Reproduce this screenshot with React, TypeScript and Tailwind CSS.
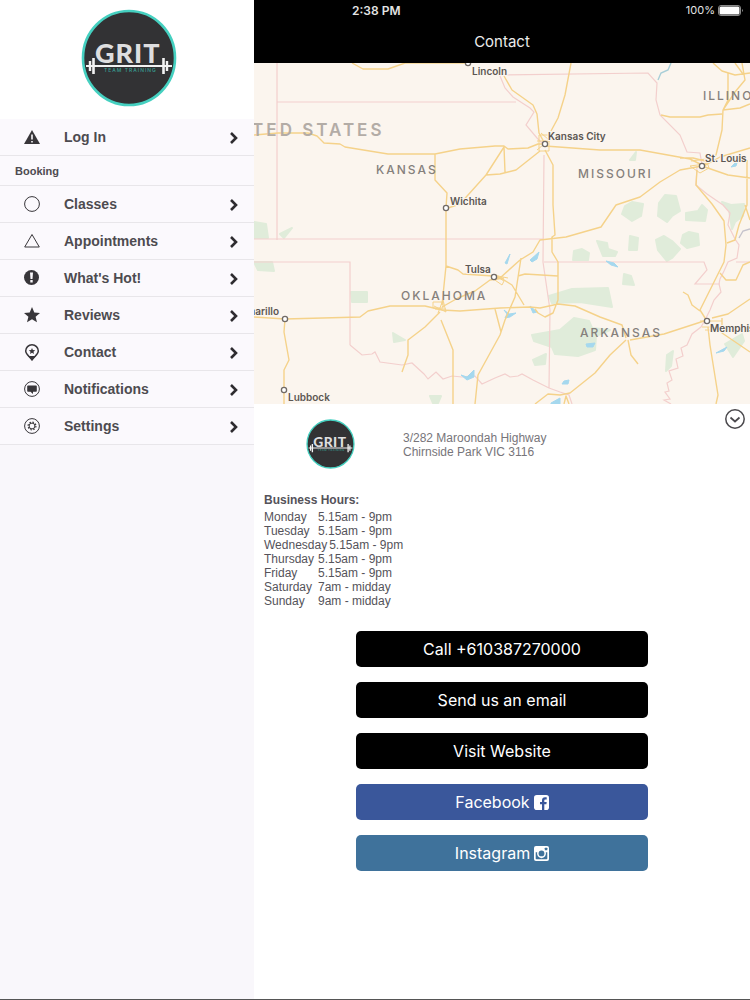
import type { ReactNode } from 'react';

const roads = [
  'M352 63L363 69H388L405 63H468',
  'M254 135L278 133H308L317 136L324 143L340 144L345 147L388 154H435L460 149L495 146H504L508 149L528 148L538 144H545',
  'M435 154V180L447 193L446 208',
  'M504 147L486 175L468 195L460 204L448 208',
  'M486 175L500 174L516 170L540 151',
  'M504 147L505 172',
  'M504 76L512 90L533 105L537 114L539 133L545 144',
  'M571 63L565 95L558 118L551 131',
  'M545 146L600 150H640L690 159L702 165',
  'M545 150L553 165V205L555 235L552 237V252L558 262V300L553 313L545 317L538 313L535 309',
  'M702 166L680 170L660 182L640 197L616 205L601 227L566 237L540 240L533 252L520 260L500 278L495 278',
  'M713 63L722 71L735 75L750 73',
  'M728 73V100L723 110L722 130L716 155L704 165',
  'M661 115L670 117H700L708 115L722 114M723 110L740 108L750 104',
  'M742 63L745 80L735 92L723 110M735 63L743 74',
  'M680 158L693 158L705 161M702 166L728 175L750 178M704 166L720 157L750 148',
  'M697 170L696 185L712 204L724 221L726 245L724 262L710 290L700 310L707 321',
  'M747 160V205L739 225L735 240L727 243M745 205L750 220',
  'M720 273L726 280H736L743 265L750 262',
  'M704 321L664 334L630 340',
  'M626 338L622 325L600 317L575 306L558 304L540 308L530 307L500 308L460 311L442 310',
  'M626 340L610 355L595 373L570 393L560 395L548 394L535 404',
  'M628 340L631 355L638 364',
  'M683 292L688 295L692 305L700 311',
  'M712 318L728 314L750 299M722 318V333L750 352M708 327L710 345L718 395L716 404',
  'M446 208V266L442 305M446 266L458 270L463 274L493 276',
  'M442 307L458 298L475 291L490 280L504 278',
  'M518 276L525 274L558 276',
  'M521 258L515 297L505 320L500 335L478 375L475 404',
  'M496 275L512 285L524 305M495 309L501 332',
  'M254 317L285 319L360 317L368 311L390 306H425L442 310',
  'M440 312L425 327L408 340V355L402 372M441 320L453 350V404',
  'M285 319L284 332L289 360L284 370V404',
  'M564 404L566 396L569 404',
];

const cityStreets = [
  'M539 135H549V151H539ZM541 133L549 140M537 141H550M537 150L550 139',
  'M433 302H443V308H433ZM434 306L446 312L443 300L438 313M435 309H446',
  'M691 161L706 159L709 168L700 173L690 166L705 164',
  'M494 275L504 281L502 285L492 278M498 276L508 278',
  'M700 321H722M702 327H716M705 330H716',
];

const borders = [
  'M277 63V240',
  'M254 239H543M277 102H516',
  'M544 155L543 262L550 310L549 388',
  'M254 262H350V345',
  'M504 75L648 73L657 83L656 100L660 115L680 135L687 152L700 153L702 165',
  'M544 262H704L707 270L695 284H720',
  'M736 262H750',
  'M500 76L505 88L513 97L530 108L534 112L526 125L537 138L545 146',
  'M350 345L362 355L372 354L375 352L380 362L402 365L412 363L424 374L428 379L436 372L443 379L452 376L462 377L470 376L475 376L482 384L495 378L505 374L510 377L518 376L522 374L533 380L549 388L560 392L569 395L572 404',
  'M697 166L696 185L707 194L723 205L730 213L728 225L735 239L739 245L737 258L728 262L724 271L720 279L719 284L721 292L714 300L710 310L705 320L701 327L692 334L687 345L681 348L683 356L676 359L678 368L669 371L672 380L667 383L669 391L665 392L670 399L664 400L671 404',
];

const forests = [
  'M625 206L632 202L643 204L641 216L632 221L622 214Z',
  'M659 203L665 195L676 196L680 211L672 216L667 222L658 216Z',
  'M686 213L698 211L702 205L707 210L705 221L686 220Z',
  'M656 240L664 236L672 241L680 249L672 258L667 261L658 250Z',
  'M683 235L689 232L698 234L699 245L687 248L681 243Z',
  'M630 236L638 238L637 250L629 250Z',
  'M597 241L607 243L608 249L617 252L615 256L603 256Z',
  'M574 251L582 249L589 253L588 260L573 260Z',
  'M624 274L631 276L634 285L623 284Z',
  'M549 296L572 289L608 288L612 307L580 302L552 303Z',
  'M532 335L560 330L574 318L589 321L592 328L610 330L596 336L595 350L578 356L555 354L552 347L534 341Z',
  'M533 360L546 354L545 364L535 365Z',
  'M667 355L673 351L671 366L666 371Z',
  'M254 222L266 224L268 238L254 238Z',
  'M280 234L292 228L284 238Z',
  'M254 262L272 262L274 271L258 270Z',
  'M351 292L367 292L367 302L352 302Z',
  'M393 333L405 340L394 342Z',
  'M430 396H441L438 403H433Z',
  'M722 202L731 205L744 204L743 216L735 222L732 229L729 210Z',
  'M725 344L742 334L744 341L733 357Z',
  'M630 160L636 152L635 160Z',
];

const lakes = [
  'M505 263L510 254L507 264Z',
  'M530 260L539 252L537 259L532 262Z',
  'M606 261L614 263L618 267L611 265Z',
  'M504 310L509 314L516 313L510 317L505 318L507 314Z',
  'M530 306L537 312L533 313Z',
  'M461 375L467 377L474 370V377L467 380Z',
  'M586 344L595 343L593 347L587 347Z',
  'M716 353L727 347L724 351Z',
  'M564 381L569 380L568 384L562 384Z',
  'M551 403L560 398V404H551Z',
  'M731 167L738 160L736 166Z',
];

const cities = [
  { name: 'Lincoln', x: 468, y: 63, tx: 472, ty: 75 },
  { name: 'Kansas City', x: 545, y: 144, tx: 548, ty: 140 },
  { name: 'St. Louis', x: 702, y: 166, tx: 705, ty: 162 },
  { name: 'Wichita', x: 446, y: 208, tx: 450, ty: 205 },
  { name: 'Tulsa', x: 494, y: 277, tx: 465, ty: 273 },
  { name: 'Amarillo', x: 285, y: 319, tx: 239, ty: 315 },
  { name: 'Lubbock', x: 284, y: 390, tx: 288, ty: 401 },
  { name: 'Memphis', x: 707, y: 321, tx: 710, ty: 332 },
];

const states = [
  { name: 'KANSAS', x: 376, y: 174 },
  { name: 'MISSOURI', x: 578, y: 178 },
  { name: 'OKLAHOMA', x: 401, y: 300 },
  { name: 'ARKANSAS', x: 580, y: 337 },
  { name: 'ILLINOIS', x: 703, y: 100 },
];

function RegionMap() {
  return (
    <svg viewBox="254 63 496 341" className="block w-full" role="img" aria-label="Map">
      <rect x="254" y="63" width="496" height="341" fill="#fbf5ee" />
      <path d={forests.join('')} fill="#e0ecda" stroke="#e0ecda" strokeWidth="2" strokeLinejoin="round" />
      <path d={borders.join('')} fill="none" stroke="#f3cfcd" strokeWidth="1.2" />
      <path d={lakes.join('')} fill="#a5d8ee" stroke="#a5d8ee" strokeWidth="1" />
      <path d="M671 63L668 70L661 73L658 80" fill="none" stroke="#a8ced8" strokeWidth="1.4" />
      <path d="M750 229L743 231L739 238" fill="none" stroke="#c5c3cc" strokeWidth="1.4" />
      <path d={roads.join('')} fill="none" stroke="#f5d28a" strokeWidth="1.4" strokeLinejoin="round" />
      <path d={cityStreets.join('')} fill="none" stroke="#f5d28a" strokeWidth="1" />
      <text x="213" y="136" className="font-[Inter] text-[17px] font-semibold tracking-[3px]" fill="#b3aca6">
        UNITED STATES
      </text>
      {states.map((s) => (
        <text key={s.name} x={s.x} y={s.y} className="font-[Inter] text-[12px] font-medium tracking-[2px]" fill="#85807c">
          {s.name}
        </text>
      ))}
      {cities.map((c) => (
        <g key={c.name}>
          <circle cx={c.x} cy={c.y} r="2.6" fill="#fff" stroke="#716a66" strokeWidth="1.3" />
          <text
            x={c.tx}
            y={c.ty}
            className="font-[Inter] text-[10px] font-semibold"
            fill="#5c5753"
            stroke="#fbf5ee"
            strokeWidth="2"
            paintOrder="stroke"
          >
            {c.name}
          </text>
        </g>
      ))}
    </svg>
  );
}

function Logo({ className }: { className: string }) {
  return (
    <svg viewBox="0 0 96 98" className={className} role="img" aria-label="Grit Team Training">
      <ellipse cx="48" cy="49" rx="46" ry="47" fill="#323234" stroke="#45d0c0" strokeWidth="2.6" />
      <text x="14" y="54" className="font-[Lato] text-[27px] font-black tracking-[1px]" fill="#dededf">
        GRIT
      </text>
      <path d="M5 57H91" stroke="#f2f2f2" strokeWidth="2" />
      <path d="M9 52V62M86 52V62" stroke="#f2f2f2" strokeWidth="2.4" />
      <path d="M12.5 49V65M82.5 49V65" stroke="#f2f2f2" strokeWidth="2.6" />
      <text x="23" y="63" className="font-[Inter] text-[5px] font-medium tracking-[1px]" fill="#389d92">
        TEAM TRAINING
      </text>
    </svg>
  );
}

const icons: Record<string, ReactNode> = {
  login: (
    <>
      <path d="M8 1L16 15H0Z" fill="currentColor" />
      <path d="M8 5.5V10.5M8 12V13.5" stroke="#fbf9fd" strokeWidth="1.6" />
    </>
  ),
  circle: <circle cx="8" cy="8" r="7.4" fill="none" stroke="currentColor" />,
  triangle: <path d="M8 1.5L15.3 14H.7Z" fill="none" stroke="currentColor" />,
  alert: (
    <>
      <circle cx="7.5" cy="7.5" r="7.5" fill="currentColor" />
      <path d="M6 2.5H9L8.5 9H6.5ZM6.3 10H8.7V12.4H6.3Z" fill="#fbf9fd" />
    </>
  ),
  star: <path d="M8 0L10.3 5.4L16 5.9L11.6 9.7L13 15.3L8 12.3L3 15.3L4.4 9.7L0 5.9L5.7 5.4Z" fill="currentColor" />,
  pin: (
    <>
      <path
        d="M8 .8A6.3 6.3 0 0 1 14.3 7.1C14.3 10.5 10 12.8 8 15.8C6 12.8 1.7 10.5 1.7 7.1A6.3 6.3 0 0 1 8 .8Z"
        fill="none"
        stroke="currentColor"
        strokeWidth="1.5"
      />
      <path d="M4 12H12L8 16.5Z" fill="currentColor" />
      <path d="M8 4L8.9 6.1L11.2 6.3L9.5 7.8L10 10L8 8.8L6 10L6.5 7.8L4.8 6.3L7.1 6.1Z" fill="currentColor" />
    </>
  ),
  message: (
    <>
      <circle cx="8" cy="8" r="7.4" fill="none" stroke="currentColor" />
      <path
        d="M4 4.5H12Q12.8 4.5 12.8 5.3V10Q12.8 10.8 12 10.8H9V13L6.5 10.8H4Q3.2 10.8 3.2 10V5.3Q3.2 4.5 4 4.5Z"
        fill="currentColor"
      />
    </>
  ),
  gear: (
    <>
      <circle cx="8" cy="8" r="7.4" fill="none" stroke="currentColor" />
      <circle cx="8" cy="8" r="2.9" fill="none" stroke="currentColor" />
      <circle cx="8" cy="8" r="3.9" fill="none" stroke="currentColor" strokeWidth="1.2" strokeDasharray="1.53 1.53" />
    </>
  ),
};

const bookingItems = [
  { label: 'Classes', icon: 'circle' },
  { label: 'Appointments', icon: 'triangle' },
  { label: "What's Hot!", icon: 'alert' },
  { label: 'Reviews', icon: 'star' },
  { label: 'Contact', icon: 'pin' },
  { label: 'Notifications', icon: 'message' },
  { label: 'Settings', icon: 'gear' },
];

function MenuItem({ label, icon }: { label: string; icon: string }) {
  return (
    <a href="#" className="flex h-[37px] items-center border-b border-[#e8e6ea] bg-[#fbf9fd] pt-px pr-4 pl-6">
      <svg viewBox="0 0 16 17" className="h-[17px] w-4 shrink-0 text-[#38363a]" aria-hidden="true">
        {icons[icon]}
      </svg>
      <span className="ml-6 flex-1 text-[14px] font-bold text-[#4d4b50]">{label}</span>
      <svg viewBox="0 0 8 12" className="h-3 w-2" aria-hidden="true">
        <path d="M1 1L6 6L1 11" fill="none" stroke="#2e2c30" strokeWidth="2.6" />
      </svg>
    </a>
  );
}

const hours = [
  ['Monday', '5.15am - 9pm'],
  ['Tuesday', '5.15am - 9pm'],
  ['Wednesday', '5.15am - 9pm'],
  ['Thursday', '5.15am - 9pm'],
  ['Friday', '5.15am - 9pm'],
  ['Saturday', '7am - midday'],
  ['Sunday', '9am - midday'],
];

function FacebookIcon() {
  return (
    <svg viewBox="0 0 15 15" className="size-[15px]" aria-hidden="true">
      <rect width="15" height="15" rx="2.8" fill="#fff" />
      <path
        d="M8 15V9.3H6V7H8V5.3C8 3.3 9.2 2.2 11 2.2H12.7V4.4H11.5C10.6 4.4 10.3 4.8 10.3 5.5V7H12.7L12.4 9.3H10.3V15Z"
        fill="#3a579b"
      />
    </svg>
  );
}

function InstagramIcon() {
  return (
    <svg viewBox="0 0 15 15" className="size-[15px]" aria-hidden="true">
      <rect width="15" height="15" rx="2" fill="#fff" />
      <path
        d="M1.7 6.3H3.2A4.5 4.5 0 1 0 11.8 6.3H13.3V12.5Q13.3 13.3 12.5 13.3H2.5Q1.7 13.3 1.7 12.5Z"
        fill="#3f729b"
      />
      <circle cx="7.5" cy="7.4" r="2.9" fill="#3f729b" />
      <rect x="10.8" y="1.8" width="2.5" height="2.5" rx=".4" fill="#3f729b" />
    </svg>
  );
}

function ActionButton({ className, children }: { className: string; children: ReactNode }) {
  return (
    <button
      type="button"
      className={`flex h-9 w-[292px] max-w-full items-center justify-center gap-1 rounded-[5px] font-[Inter] text-[16px] text-white ${className}`}
    >
      {children}
    </button>
  );
}

export default function App() {
  return (
    <div className="flex min-h-screen border-b border-[#555] bg-white font-['Liberation_Sans',sans-serif]">
      <aside className="w-[254px] shrink-0 bg-[#f9f7fb]">
        <div className="flex h-[119px] justify-center bg-white pt-[9px] pl-[3px]">
          <Logo className="h-[98px] w-24" />
        </div>
        <nav>
          <MenuItem label="Log In" icon="login" />
          <h2 className="flex h-[30px] items-center border-b border-[#e8e6ea] bg-[#fbf9fd] pt-px pl-[15px] text-[11px] font-bold text-[#4d4b50]">
            Booking
          </h2>
          {bookingItems.map((item) => (
            <MenuItem key={item.label} {...item} />
          ))}
        </nav>
      </aside>

      <main className="min-w-0 flex-1">
        <header className="bg-black font-[Inter] text-white">
          <div className="flex h-[21px] items-center justify-between pr-[6px] pl-[98px]">
            <span className="text-[12px] font-semibold text-[#e4e4e4]">2:38 PM</span>
            <span className="flex items-center gap-[3px] text-[11px] text-[#e4e4e4]">
              100%
              <svg viewBox="0 0 26 11" className="h-[11px] w-[26px]" aria-hidden="true">
                <rect x=".5" y=".5" width="22" height="10" rx="2.5" fill="none" stroke="#8a8a8a" />
                <rect x="1.5" y="1.5" width="20" height="8" rx="1.5" fill="#fff" />
                <path d="M24 4Q26 5.5 24 7Z" fill="#8a8a8a" />
              </svg>
            </span>
          </div>
          <h1 className="flex h-[42px] items-center justify-center text-[15px] text-[#ececec]">Contact</h1>
        </header>

        <RegionMap />

        <section className="flex items-start pt-[5px] pr-[5px] pl-[52px]">
          <Logo className="mt-[10px] h-[50px] w-[49px]" />
          <address className="mt-[22px] ml-12 flex-1 text-[12px] leading-[14px] text-[#77757a] not-italic">
            3/282 Maroondah Highway
            <br />
            Chirnside Park VIC 3116
          </address>
          <button type="button" aria-label="Collapse" className="size-5">
            <svg viewBox="0 0 20 20" className="size-5">
              <circle cx="10" cy="10" r="9.2" fill="none" stroke="#4a484c" strokeWidth="1.5" />
              <path d="M5.5 8.5L10 12.5L14.5 8.5" fill="none" stroke="#4a484c" strokeWidth="1.7" />
            </svg>
          </button>
        </section>

        <section className="mt-6 pl-[10px] text-[12px] text-[#55535a]">
          <h2 className="leading-[14px] font-bold">Business Hours:</h2>
          <table className="mt-[3px] block leading-[14px]">
            <tbody className="block">
              {hours.map(([day, time]) => (
                <tr key={day} className="flex gap-[2px]">
                  <th scope="row" className="min-w-[52px] text-left font-normal">
                    {day}
                  </th>
                  <td>{time}</td>
                </tr>
              ))}
            </tbody>
          </table>
        </section>

        <div className="mt-[23px] flex flex-col items-center gap-[15px] pb-8">
          <ActionButton className="bg-black">Call +610387270000</ActionButton>
          <ActionButton className="bg-black">Send us an email</ActionButton>
          <ActionButton className="bg-black">Visit Website</ActionButton>
          <ActionButton className="bg-[#3a579b]">
            Facebook <FacebookIcon />
          </ActionButton>
          <ActionButton className="bg-[#3f729b]">
            Instagram <InstagramIcon />
          </ActionButton>
        </div>
      </main>
    </div>
  );
}
